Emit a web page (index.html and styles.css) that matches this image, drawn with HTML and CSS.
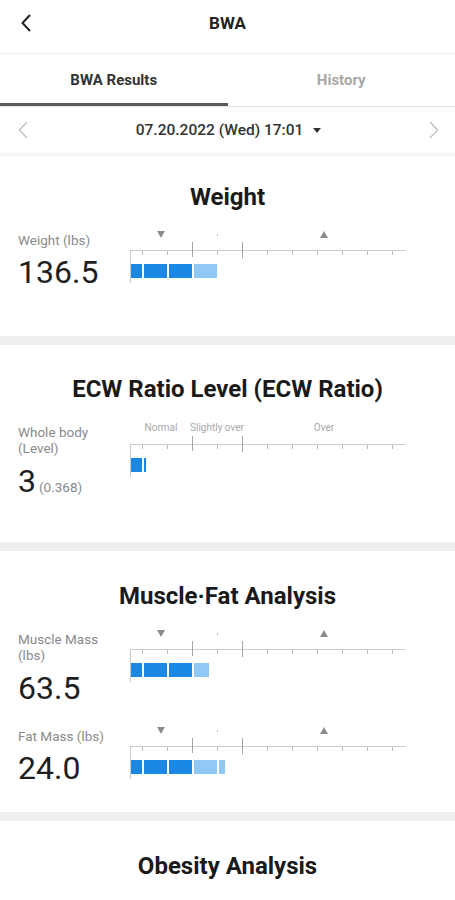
FILE: index.html
```html
<!DOCTYPE html>
<html lang="en">
<head>
    <meta charset="UTF-8">
    <meta name="viewport" content="width=device-width, initial-scale=1.0">
    <title>BWA</title>
    <link rel="stylesheet" href="styles.css">
</head>
<body>
    <header class="topbar">
        <button type="button" class="back">
            <svg width="12" height="20" viewBox="0 0 12 20"><path d="M10 2 L2.5 10 L10 18" fill="none" stroke="#222" stroke-width="2"/></svg>
        </button>
        <h1>BWA</h1>
        <span></span>
    </header>

    <nav class="tabs">
        <a href="" class="tab active">BWA Results</a>
        <a href="" class="tab">History</a>
    </nav>

    <div class="date-bar">
        <svg width="12" height="20" viewBox="0 0 12 20"><path d="M10 2 L2.5 10 L10 18" fill="none" stroke="#c4c4c4" stroke-width="1.5"/></svg>
        <div class="date">07.20.2022 (Wed) 17:01<span class="caret"></span></div>
        <svg width="12" height="20" viewBox="0 0 12 20"><path d="M2 2 L9.5 10 L2 18" fill="none" stroke="#c4c4c4" stroke-width="1.5"/></svg>
    </div>

    <main>
        <!-- Weight -->
        <section class="card card-first card-tall">
            <h2>Weight</h2>
            <div class="metric">
                <div class="info">
                    <p class="label">Weight (lbs)</p>
                    <p class="value">136.5</p>
                </div>
                <div class="gauge">
                    <div class="head">
                        <span><i class="tri-down"></i></span>
                        <span><i class="dot"></i></span>
                        <span><i class="tri-up"></i></span>
                    </div>
                    <div class="axis"></div>
                    <div class="bar">
                        <b class="seg first"></b><b class="seg"></b><b class="seg"></b><b class="seg light"></b>
                    </div>
                </div>
            </div>
        </section>

        <!-- ECW -->
        <section class="card card-ecw">
            <h2>ECW Ratio Level (ECW Ratio)</h2>
            <div class="metric">
                <div class="info">
                    <p class="label">Whole body<br>(Level)</p>
                    <p class="value two-line">3<small>(0.368)</small></p>
                </div>
                <div class="gauge">
                    <div class="head head-text">
                        <span>Normal</span>
                        <span>Slightly over</span>
                        <span>Over</span>
                    </div>
                    <div class="axis"></div>
                    <div class="bar">
                        <b class="seg first"></b><b class="seg" style="width: 2px"></b>
                    </div>
                </div>
            </div>
        </section>

        <!-- Muscle / Fat -->
        <section class="card card-muscle">
            <h2>Muscle·Fat Analysis</h2>
            <div class="metric">
                <div class="info">
                    <p class="label">Muscle Mass<br>(lbs)</p>
                    <p class="value two-line">63.5</p>
                </div>
                <div class="gauge">
                    <div class="head">
                        <span><i class="tri-down"></i></span>
                        <span><i class="dot"></i></span>
                        <span><i class="tri-up"></i></span>
                    </div>
                    <div class="axis"></div>
                    <div class="bar">
                        <b class="seg first"></b><b class="seg"></b><b class="seg"></b><b class="seg light" style="width: 15px"></b>
                    </div>
                </div>
            </div>
            <div class="metric">
                <div class="info">
                    <p class="label">Fat Mass (lbs)</p>
                    <p class="value">24.0</p>
                </div>
                <div class="gauge">
                    <div class="head">
                        <span><i class="tri-down"></i></span>
                        <span><i class="dot"></i></span>
                        <span><i class="tri-up"></i></span>
                    </div>
                    <div class="axis"></div>
                    <div class="bar">
                        <b class="seg first"></b><b class="seg"></b><b class="seg"></b><b class="seg light"></b><b class="seg light" style="width: 6px"></b>
                    </div>
                </div>
            </div>
        </section>

        <!-- Obesity -->
        <section class="card">
            <h2>Obesity Analysis</h2>
            <div class="metric">
                <div class="info">
                    <p class="label">BMI (kg/m²)</p>
                    <p class="value">22.7</p>
                </div>
                <div class="gauge">
                    <div class="head">
                        <span><i class="tri-down"></i></span>
                        <span><i class="dot"></i></span>
                        <span><i class="tri-up"></i></span>
                    </div>
                    <div class="axis"></div>
                    <div class="bar">
                        <b class="seg first"></b><b class="seg"></b><b class="seg"></b><b class="seg light"></b>
                    </div>
                </div>
            </div>
        </section>
    </main>
</body>
</html>
```

FILE: styles.css
```css
* {
    margin: 0;
    padding: 0;
    box-sizing: border-box;
    font-family: Roboto, "Noto Sans", Arial, sans-serif;
}

body {
    background-color: #efefef;
    color: #222;
}

.topbar {
    display: grid;
    grid-template-columns: 52px 1fr 52px;
    align-items: center;
    height: 54px;
    padding-bottom: 7px;
    background-color: white;
    border-bottom: 1px solid #ececec;
}

.back {
    border: none;
    background: none;
    height: 46px;
    padding-left: 20px;
    text-align: left;
    display: flex;
    align-items: center;
}

.topbar h1 {
    font-size: 17px;
    font-weight: 700;
    text-align: center;
    color: #222;
}

.tabs {
    display: flex;
    height: 53px;
    background-color: white;
    border-bottom: 1px solid #e4e4e4;
}

.tab {
    flex: 1;
    display: flex;
    align-items: center;
    justify-content: center;
    text-decoration: none;
    font-size: 15px;
    font-weight: 700;
    color: #a8a8a8;
}

.tab.active {
    color: #333;
    box-shadow: inset 0 -3px 0 #5a5a5a;
}

.date-bar {
    display: flex;
    align-items: center;
    height: 49px;
    padding: 0 15px 0 17px;
    background-color: white;
    border-bottom: 3px solid #f6f6f6;
}

.date {
    flex: 1;
    text-align: center;
    font-size: 15.5px;
    font-weight: 500;
    color: #333;
}

.caret {
    display: inline-block;
    margin-left: 10px;
    vertical-align: middle;
    border-left: 4px solid transparent;
    border-right: 4px solid transparent;
    border-top: 5px solid #333;
}

.card {
    background-color: white;
    padding: 31px 0 28px;
    margin-bottom: 9px;
}

.card-first {
    padding-top: 27px;
}

.card-tall {
    padding-bottom: 46px;
}

.card-ecw {
    padding-top: 30px;
    padding-bottom: 37px;
}

.card-muscle {
    padding-bottom: 26px;
}

.card h2 {
    font-size: 24px;
    line-height: 28px;
    font-weight: 700;
    text-align: center;
    color: #1a1a1a;
    margin-bottom: 16px;
}

.metric {
    display: grid;
    grid-template-columns: 112px 276px;
    padding-left: 18px;
}

.metric + .metric {
    margin-top: 17px;
}

.label {
    margin-top: 5px;
    font-size: 13.5px;
    line-height: 16px;
    color: #8a8a8a;
}

.value {
    margin-top: 6px;
    font-size: 32px;
    line-height: 36px;
    color: #1e1e1e;
}

.value.two-line {
    margin-top: 7px;
}

.value small {
    font-size: 13.5px;
    color: #8a8a8a;
    margin-left: 3px;
}

/* gauge */
.head {
    display: grid;
    grid-template-columns: 62px 50px 1fr;
    height: 15px;
}

.head span {
    display: flex;
    align-items: center;
    justify-content: center;
    white-space: nowrap;
}

.head-text {
    height: 17px;
    font-size: 10px;
    color: #a9a9a9;
}

.tri-down {
    border-left: 4px solid transparent;
    border-right: 4px solid transparent;
    border-top: 7px solid #8c8c8c;
}

.tri-up {
    border-left: 4px solid transparent;
    border-right: 4px solid transparent;
    border-bottom: 7px solid #8c8c8c;
}

.dot {
    width: 1px;
    height: 2px;
    background-color: #b5b5b5;
}

.axis {
    height: 16px;
    background:
        linear-gradient(#a5a5a5, #a5a5a5) 62px 0 / 1px 15px no-repeat,
        linear-gradient(#a5a5a5, #a5a5a5) 112px 0 / 1px 16px no-repeat,
        linear-gradient(#c9c9c9, #c9c9c9) 0 8px / 1px 8px no-repeat,
        linear-gradient(#cdcdcd, #cdcdcd) 0 8px / 100% 1px no-repeat,
        repeating-linear-gradient(to right, transparent 0 12px, #b9b9b9 12px 13px, transparent 13px 25px) 0 9px / 100% 4px no-repeat;
}

.bar {
    display: flex;
    gap: 2px;
    padding: 6px 0 5px;
    border-left: 1px solid #c9c9c9;
}

.seg {
    width: 23px;
    height: 14px;
    background-color: #1b89e4;
}

.seg.first {
    width: 11px;
}

.seg.light {
    background-color: #90c8f6;
}
```
